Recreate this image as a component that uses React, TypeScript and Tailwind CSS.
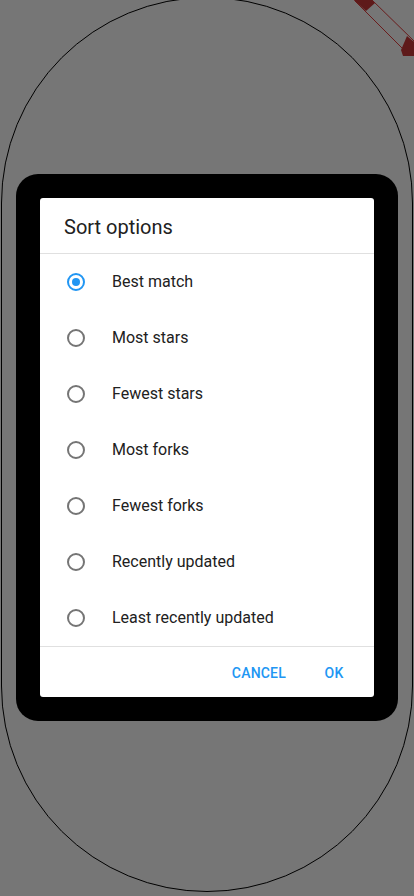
import { useState } from 'react';

const options = [
  'Best match',
  'Most stars',
  'Fewest stars',
  'Most forks',
  'Fewest forks',
  'Recently updated',
  'Least recently updated',
];

function Radio({ checked }: { checked: boolean }) {
  return (
    <span
      className={
        checked
          ? 'flex h-[18px] w-[18px] items-center justify-center rounded-full border-2 border-[#2196f3]'
          : 'flex h-[18px] w-[18px] items-center justify-center rounded-full border-2 border-[#757575]'
      }
    >
      {checked && <span className="h-[8px] w-[8px] rounded-full bg-[#2196f3]" />}
    </span>
  );
}

function CornerBand() {
  // the little dark red ribbon cut off in the top right corner
  return (
    <svg
      className="absolute right-0 top-0"
      width="60"
      height="56"
      viewBox="0 0 60 56"
    >
      <polygon points="1,0 18,0 60,41 60,56 56,56 1,1" fill="none" stroke="#6a1c1c" strokeWidth="1" />
      <polygon points="0,0 18,0 21,3 12,11 0,0" fill="#5e1a1a" />
      <polygon points="53,36 60,42 60,56 49,56 47,50" fill="#5e1a1a" />
    </svg>
  );
}

export default function App() {
  const [selected, setSelected] = useState(0);

  return (
    <div
      className="relative h-[896px] w-[414px] overflow-hidden bg-[#767676]"
      style={{ fontFamily: 'Roboto, "Noto Sans", Arial, sans-serif' }}
    >
      <CornerBand />
      <div className="mx-[1px] -mt-[3px] flex h-[895px] items-center justify-center rounded-full border border-black pt-[5px]">
        <div className="rounded-[22px] bg-black p-6">
          <div className="flex w-[334px] flex-col rounded-[3px] bg-white">
            <div className="flex h-[56px] items-center border-b border-[#e0e0e0] px-6 pt-[4px] text-[20px] text-[#212121]">
              Sort options
            </div>
            <div className="flex flex-col">
              {options.map((label, i) => (
                <button
                  key={label}
                  onClick={() => setSelected(i)}
                  className="flex h-[56px] items-center text-left"
                >
                  <span className="ml-[27px] mr-[27px] flex">
                    <Radio checked={selected === i} />
                  </span>
                  <span className="text-[16px] text-[#212121]">{label}</span>
                </button>
              ))}
            </div>
            <div className="flex h-[51px] items-center justify-end gap-2 border-t border-[#e0e0e0] px-2 pt-[3px]">
              <button className="flex h-9 min-w-16 items-center justify-center px-2 text-[14px] font-medium tracking-[0.2px] text-[#2196f3]">
                CANCEL
              </button>
              <button className="flex h-9 min-w-16 items-center justify-center px-2 text-[14px] font-medium tracking-[0.2px] text-[#2196f3]">
                OK
              </button>
            </div>
          </div>
        </div>
      </div>
    </div>
  );
}
